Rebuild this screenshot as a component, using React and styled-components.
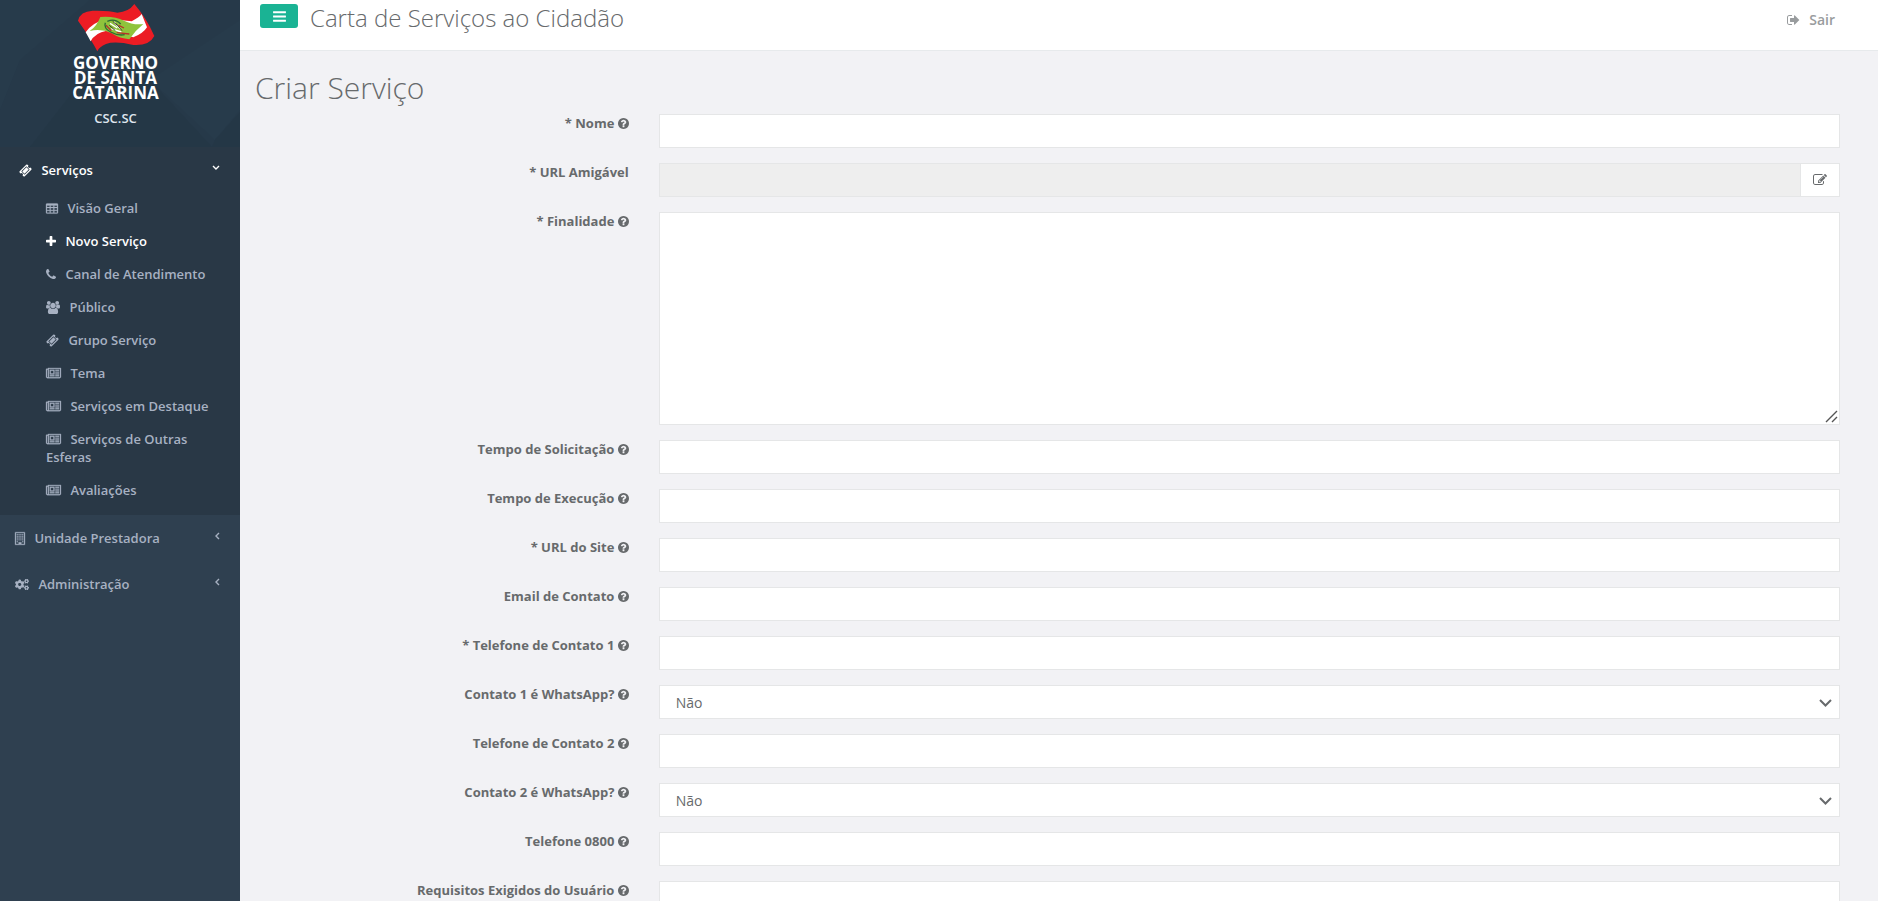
import React from 'react';
import styled, { createGlobalStyle, css } from 'styled-components';
import { FaCogs } from 'react-icons/fa';

const color = {
  text: '#676a6c',
  muted: '#999c9e',
  nav: '#a7b1c2',
  navBg: '#2f4050',
  navActive: '#293846',
  navHeader: '#263949',
  page: '#f2f2f5',
  line: '#e5e6e7',
  primary: '#1ab394',
};

const GlobalStyle = createGlobalStyle`
  *, *::before, *::after { box-sizing: border-box; }
  body {
    margin: 0;
    background: ${color.navBg};
    color: ${color.text};
    font-family: "Open Sans", "Noto Sans", sans-serif;
    font-size: 13px;
    line-height: 18px;
  }
  ul { list-style: none; margin: 0; padding: 0; }
  a { color: inherit; text-decoration: none; }
`;

/* ---------- icons ---------- */

const Glyph = styled.svg`
  width: ${(p) => p.$w}px;
  height: ${(p) => p.$h || 13}px;
  fill: currentColor;
  vertical-align: -2px;
  overflow: visible;
`;

const shapes = {
  bars: [128, 1536, 'M1664 1344v128q0 26-19 45t-45 19h-1408q-26 0-45-19t-19-45v-128q0-26 19-45t45-19h1408q26 0 45 19t19 45zm0-512v128q0 26-19 45t-45 19h-1408q-26 0-45-19t-19-45v-128q0-26 19-45t45-19h1408q26 0 45 19t19 45zm0-512v128q0 26-19 45t-45 19h-1408q-26 0-45-19t-19-45v-128q0-26 19-45t45-19h1408q26 0 45 19t19 45z'],
  plus: [192, 1408, 'M1600 736v192q0 40-28 68t-68 28h-416v416q0 40-28 68t-68 28h-192q-40 0-68-28t-28-68v-416h-416q-40 0-68-28t-28-68v-192q0-40 28-68t68-28h416v-416q0-40 28-68t68-28h192q40 0 68 28t28 68v416h416q40 0 68 28t28 68z'],
  phone: [192, 1408, 'M1600 1240q0 27-10 70.5t-21 68.5q-21 50-122 106-94 51-186 51-27 0-53-3.5t-57.5-12.5-47-14.5-55.5-20.5-49-18q-98-35-175-83-127-79-264-216t-216-264q-48-77-83-175-3-9-18-49t-20.5-55.5-14.5-47-12.5-57.5-3.5-53q0-92 51-186 56-101 106-122 25-11 68.5-21t70.5-10q14 0 21 3 18 6 53 76 11 19 30 54t35 63.5 31 53.5q3 4 17.5 25t21.5 35.5 7 28.5q0 20-28.5 50t-62 55-62 53-28.5 46q0 9 5 22.5t8.5 20.5 14 24 11.5 19q76 137 174 235t235 174q2 1 19 11.5t24 14 20.5 8.5 22.5 5q18 0 46-28.5t53-62 55-62 50-28.5q14 0 28.5 7t35.5 21.5 25 17.5q25 15 53.5 31t63.5 35 54 30q70 35 76 53 3 7 3 21z'],
  help: [128, 1536, 'M1024 1376v-192q0-14-9-23t-23-9h-192q-14 0-23 9t-9 23v192q0 14 9 23t23 9h192q14 0 23-9t9-23zm256-672q0-88-55.5-163t-138.5-116-170-41q-243 0-371 213-15 24 8 42l132 100q7 6 19 6 16 0 25-12 53-68 86-92 34-24 86-24 48 0 85.5 26t37.5 59q0 38-20 61t-68 45q-63 28-115.5 86.5t-52.5 125.5v36q0 14 9 23t23 9h192q14 0 23-9t9-23q0-19 21.5-49.5t54.5-49.5q32-18 49-28.5t46-35 44.5-48 28-60.5 12.5-81zm384 192q0 209-103 385.5t-279.5 279.5-385.5 103-385.5-103-279.5-279.5-103-385.5 103-385.5 279.5-279.5 385.5-103 385.5 103 279.5 279.5 103 385.5z'],
  signOut: [64, 1664, 'M704 1440q0 4 1 20t.5 26.5-3 23.5-10 19.5-20.5 6.5h-320q-119 0-203.5-84.5t-84.5-203.5v-704q0-119 84.5-203.5t203.5-84.5h320q13 0 22.5 9.5t9.5 22.5q0 4 1 20t.5 26.5-3 23.5-10 19.5-20.5 6.5h-320q-66 0-113 47t-47 113v704q0 66 47 113t113 47h312l11.5 1 11.5 3 8 5.5 7 9 2 13.5zm928-544q0 26-19 45l-544 544q-19 19-45 19t-45-19-19-45v-288h-448q-26 0-45-19t-19-45v-384q0-26 19-45t45-19h448v-288q0-26 19-45t45-19 45 19l544 544q19 19 19 45z'],
  edit: [0, 1792, 'M888 1184l116-116-152-152-116 116v56h96v96h56zm440-720q-16-16-33 1l-350 350q-17 17-1 33t33-1l350-350q17-17 1-33zm80 594v190q0 119-84.5 203.5t-203.5 84.5h-832q-119 0-203.5-84.5t-84.5-203.5v-832q0-119 84.5-203.5t203.5-84.5h832q63 0 117 25 15 7 18 23 3 17-9 29l-49 49q-14 14-32 8-23-6-45-6h-832q-66 0-113 47t-47 113v832q0 66 47 113t113 47h832q66 0 113-47t47-113v-126q0-13 9-22l64-64q15-15 35-7t20 29zm-96-738l288 288-672 672h-288v-288zm444 132l-92 92-288-288 92-92q28-28 68-28t68 28l152 152q28 28 28 68t-28 68z'],
  users: [0, 1920, 'M593 896q-162 5-265 128h-134q-82 0-138-40.5t-56-118.5q0-353 124-353 6 0 43.5 21t97.5 42.5 119 21.5q67 0 133-23-5 37-5 66 0 159 93 293zm1071 637q0 120-73 189.5t-194 69.5h-874q-121 0-194-69.5t-73-189.5q0-53 3.5-103.5t14-109 26.5-108.5 43-97.5 62-81 85.5-53.5 111.5-20q10 0 43 21.5t73 48 107 48 135 21.5 135-21.5 107-48 73-48 43-21.5q61 0 111.5 20t85.5 53.5 62 81 43 97.5 26.5 108.5 14 109 3.5 103.5zm-1024-1277q0 106-75 181t-181 75-181-75-75-181 75-181 181-75 181 75 75 181zm704 384q0 159-112.5 271.5t-271.5 112.5-271.5-112.5-112.5-271.5 112.5-271.5 271.5-112.5 271.5 112.5 112.5 271.5zm576 225q0 78-56 118.5t-138 40.5h-134q-103-123-265-128 93-134 93-293 0-29-5-66 66 23 133 23 59 0 119-21.5t97.5-42.5 43.5-21q124 0 124 353zm-128-609q0 106-75 181t-181 75-181-75-75-181 75-181 181-75 181 75 75 181z'],
  ticket: [64, 1664, 'M1024 452l316 316-572 572-316-316zm-211 979l618-618q19-19 19-45t-19-45l-362-362q-18-18-45-18t-45 18l-618 618q-19 19-19 45t19 45l362 362q18 18 45 18t45-18zm889-637l-907 908q-37 37-90.5 37t-90.5-37l-126-126q56-56 56-136t-56-136-136-56-136 56l-125-126q-37-37-37-90.5t37-90.5l907-906q37-37 90.5-37t90.5 37l125 125q-56 56-56 136t56 136 136 56 136-56l126 125q37 37 37 90.5t-37 90.5z'],
  news: [0, 2048, 'M1024 512h-384v384h384v-384zm128 640v128h-640v-128h640zm0-768v640h-640v-640h640zm640 768v128h-512v-128h512zm0-256v128h-512v-128h512zm0-256v128h-512v-128h512zm0-256v128h-512v-128h512zm-1536 960v-960h-128v960q0 26 19 45t45 19 45-19 19-45zm1664 0v-1088h-1536v1088q0 33-11 64h1483q26 0 45-19t19-45zm128-1216v1216q0 80-56 136t-136 56h-1664q-80 0-136-56t-56-136v-1088h256v-128h1792z'],
  table: [0, 1664, 'M160 192h1344q160 0 160 160v1088q0 160-160 160h-1344q-160 0-160-160v-1088q0-160 160-160zM128 480v224h384v-224zM640 480v224h384v-224zM1152 480v224h384v-224zM128 832v256h384v-256zM640 832v256h384v-256zM1152 832v256h384v-256zM128 1216v256h384v-256zM640 1216v256h384v-256zM1152 1216v256h384v-256z'],
  building: [0, 1408, 'M64 0h1280q64 0 64 64v1664q0 64-64 64h-1280q-64 0-64-64v-1664q0-64 64-64zM128 128v1536h384v-224q0-32 32-32h320q32 0 32 32v224h384v-1536zM256 256h128v128h-128zM512 256h128v128h-128zM768 256h128v128h-128zM1024 256h128v128h-128zM256 512h128v128h-128zM512 512h128v128h-128zM768 512h128v128h-128zM1024 512h128v128h-128zM256 768h128v128h-128zM512 768h128v128h-128zM768 768h128v128h-128zM1024 768h128v128h-128zM256 1024h128v128h-128zM512 1024h128v128h-128zM768 1024h128v128h-128zM1024 1024h128v128h-128zM256 1280h128v128h-128zM1024 1280h128v128h-128z'],
};

const heavy = ['news', 'building', 'table'];

function Icon({ name, w, h }) {
  const [x, width, d] = shapes[name];
  const stroke = heavy.includes(name) ? { stroke: 'currentColor', strokeWidth: 40 } : {};
  return (
    <Glyph $w={w} $h={h} viewBox={`${x} 0 ${width} 1792`} aria-hidden="true">
      <path d={d} fillRule="evenodd" {...stroke} />
    </Glyph>
  );
}

const Cogs = styled(FaCogs)`
  width: 14px;
  height: 13px;
  vertical-align: -2px;
`;

const Arrow = styled.svg`
  flex: none;
  width: 8px;
  height: 8px;
  margin-top: 3px;
  fill: none;
  stroke: currentColor;
  stroke-width: 1.4;
`;

/* ---------- sidebar ---------- */

const Shell = styled.div`
  display: flex;
  min-height: 100vh;
`;

const Sidebar = styled.nav`
  flex: none;
  width: 240px;
  background: ${color.navBg};
  color: ${color.nav};
  font-weight: 600;
`;

const Brand = styled.div`
  position: relative;
  display: flex;
  flex-direction: column;
  align-items: center;
  height: 147px;
  padding-top: 3px;
  padding-right: 9px;
  background: ${color.navHeader};
  overflow: hidden;
`;

const Facets = styled.svg`
  position: absolute;
  inset: 0;
  width: 100%;
  height: 100%;
`;

const Flag = styled.svg`
  position: relative;
  width: 78px;
  height: 49px;
`;

const BrandName = styled.div`
  position: relative;
  margin-top: 3px;
  color: #fff;
  font-size: 17px;
  font-weight: 700;
  line-height: 15px;
  text-align: center;
  white-space: pre-line;
`;

const UserName = styled.a`
  position: relative;
  margin-top: 9px;
  color: #dfe4ed;
`;

const NavItem = styled.li`
  ${(p) =>
    p.$active &&
    css`
      border-left: 4px solid ${color.navActive};
      background: ${color.navActive};
      color: #fff;
    `}
`;

const NavLink = styled.a`
  display: flex;
  justify-content: space-between;
  padding: 14px 20px 14px 15px;
`;

const NavText = styled.span`
  svg { margin-right: 6px; }
`;

const SubList = styled.ul`
  display: flex;
  flex-direction: column;
  gap: 1px;
  margin-top: -1px;
  padding-bottom: 9px;
  color: ${color.nav};
`;

const SubLink = styled.a`
  display: block;
  padding: 7px 10px 7px 42px;
  color: ${(p) => (p.$active ? '#fff' : 'inherit')};

  svg { margin-right: 6px; }
`;

const subItems = [
  ['table', 12, 'Visão Geral'],
  ['plus', 10, 'Novo Serviço'],
  ['phone', 10, 'Canal de Atendimento'],
  ['users', 14, 'Público'],
  ['ticket', 13, 'Grupo Serviço'],
  ['news', 15, 'Tema'],
  ['news', 15, 'Serviços em Destaque'],
  ['news', 15, 'Serviços de Outras Esferas'],
  ['news', 15, 'Avaliações'],
];

function StateFlag() {
  return (
    <Flag viewBox="231 9 234 147" aria-hidden="true">
      <path fill="#ec1c24" d="M234 62Q240 34 278 32Q330 31 352 38Q386 36 403 12Q440 55 463 108Q448 138 400 135Q345 122 318 132Q298 140 292 154Q272 115 234 62Z" />
      <path fill="#fff" d="M257 97Q275 68 320 56L395 64Q418 52 425 42L441 82Q430 100 400 112L320 92Q285 98 272 124Z" />
      <path fill="#8fc33c" d="M269 93Q290 80 301 51Q345 48 372 62Q400 76 430 72Q405 92 388 118Q360 116 335 100Q305 85 269 93Z" />
      <g fill="none" strokeWidth="4">
        <path stroke="#2c6a33" d="M316 68Q310 84 332 96Q354 108 374 104M322 64Q345 54 362 72" />
        <path stroke="#fff" d="M330 70L352 84M342 66L362 88M334 86L364 96" />
        <path stroke="#b5342a" d="M318 76L334 92M356 76L372 84M350 98L388 102" />
        <path stroke="#3a3a26" strokeWidth="3" d="M328 76L346 92M348 70L366 92M338 64L352 76" />
      </g>
    </Flag>
  );
}

function Side() {
  return (
    <Sidebar>
      <Brand>
        <Facets viewBox="0 0 240 147" preserveAspectRatio="none" aria-hidden="true">
          <path fill="#273b4b" d="M0 0H90L20 60L0 110ZM150 80L240 20V110L215 140Z" />
          <path fill="#243746" d="M90 70L150 80L212 147H30ZM215 140L240 112V147H212Z" />
        </Facets>
        <StateFlag />
        <BrandName>{'GOVERNO\nDE SANTA\nCATARINA'}</BrandName>
        <UserName href="#perfil">CSC.SC</UserName>
      </Brand>
      <ul>
        <NavItem $active>
          <NavLink href="#servicos">
            <NavText><Icon name="ticket" w={13} /> Serviços</NavText>
            <Arrow viewBox="0 0 8 8"><path d="M1 2L4 5L7 2" /></Arrow>
          </NavLink>
          <SubList>
            {subItems.map(([icon, w, text]) => (
              <li key={text}>
                <SubLink href="#item" $active={icon === 'plus'}>
                  <Icon name={icon} w={w} /> {text}
                </SubLink>
              </li>
            ))}
          </SubList>
        </NavItem>
        <NavItem>
          <NavLink href="#unidade">
            <NavText><Icon name="building" w={10} /> Unidade Prestadora</NavText>
            <Arrow viewBox="0 0 8 8"><path d="M7 1L4 4L7 7" /></Arrow>
          </NavLink>
        </NavItem>
        <NavItem>
          <NavLink href="#administracao">
            <NavText><Cogs /> Administração</NavText>
            <Arrow viewBox="0 0 8 8"><path d="M7 1L4 4L7 7" /></Arrow>
          </NavLink>
        </NavItem>
      </ul>
    </Sidebar>
  );
}

/* ---------- top bar ---------- */

const Main = styled.div`
  flex: 1;
  min-width: 0;
  background: ${color.page};
`;

const TopBar = styled.header`
  display: flex;
  align-items: flex-start;
  height: 51px;
  padding: 4px 43px 0 20px;
  background: #fff;
  border-bottom: 1px solid #e7eaec;
`;

const MenuButton = styled.button`
  display: flex;
  align-items: center;
  justify-content: center;
  width: 38px;
  height: 24px;
  padding: 0;
  border: 0;
  border-radius: 3px;
  background: ${color.primary};
  color: #fff;
`;

const AppTitle = styled.span`
  flex: 1;
  margin-left: 12px;
  font-size: 24px;
  font-weight: 300;
  line-height: 28px;
`;

const Logout = styled.a`
  padding-top: 7px;
  color: ${color.muted};
  font-size: 14px;
  font-weight: 600;

  svg { margin-right: 6px; }
`;

/* ---------- form ---------- */

const PageTitle = styled.h1`
  margin: 0;
  padding: 20px 15px 10px;
  font-size: 30px;
  font-weight: 300;
  line-height: 33px;
`;

const Form = styled.form`
  display: flex;
  flex-direction: column;
  gap: 15px;
  padding: 0 23px 15px 0;
`;

const Row = styled.div`
  display: grid;
  grid-template-columns: minmax(0, 1fr) minmax(0, 3fr);
  align-items: start;
`;

const Label = styled.label`
  padding: 0 15px;
  font-weight: 700;
  text-align: right;
`;

const Cell = styled.div`
  position: relative;
  display: flex;
  padding: 0 15px;
`;

const field = css`
  display: block;
  flex: 1;
  min-width: 0;
  width: 100%;
  height: 34px;
  margin: 0;
  padding: 6px 12px;
  border: 1px solid ${color.line};
  border-radius: 0;
  outline: 0;
  background: #fff;
  color: inherit;
  font-family: inherit;
  font-size: 14px;
`;

const TextInput = styled.input`
  ${field}
  &:read-only { background: #eee; }
`;

const TextArea = styled.textarea`
  ${field}
  height: 213px;
  resize: vertical;
`;

const Grip = styled.svg`
  position: absolute;
  right: 17px;
  bottom: 2px;
  width: 13px;
  height: 13px;
  background: #fff;
  fill: none;
  stroke: #555;
  stroke-width: 1.4;
  pointer-events: none;
`;

const Select = styled.select`
  ${field}
  padding: 6px 16px;
  appearance: none;
`;

const SelectArrow = styled.svg`
  position: absolute;
  top: 14px;
  right: 23px;
  width: 13px;
  height: 8px;
  fill: none;
  stroke: ${color.text};
  stroke-width: 2;
  pointer-events: none;
`;

const EditButton = styled.button`
  flex: none;
  width: 39px;
  height: 34px;
  padding: 0;
  border: 1px solid ${color.line};
  border-left: 0;
  background: #fff;
  color: ${color.text};
`;

const rows = [
  { id: 'nome', label: '* Nome' },
  { id: 'url', label: '* URL Amigável', kind: 'url' },
  { id: 'finalidade', label: '* Finalidade', kind: 'area' },
  { id: 'solicitacao', label: 'Tempo de Solicitação' },
  { id: 'execucao', label: 'Tempo de Execução' },
  { id: 'site', label: '* URL do Site' },
  { id: 'email', label: 'Email de Contato' },
  { id: 'telefone1', label: '* Telefone de Contato 1' },
  { id: 'whatsapp1', label: 'Contato 1 é WhatsApp?', kind: 'select' },
  { id: 'telefone2', label: 'Telefone de Contato 2' },
  { id: 'whatsapp2', label: 'Contato 2 é WhatsApp?', kind: 'select' },
  { id: 'telefone0800', label: 'Telefone 0800' },
  { id: 'requisitos', label: 'Requisitos Exigidos do Usuário', kind: 'area' },
];

function Control({ id, kind }) {
  if (kind === 'area') {
    return (
      <>
        <TextArea id={id} />
        <Grip viewBox="0 0 13 13"><path d="M1 12L12 1M7 12L12 7" /></Grip>
      </>
    );
  }
  if (kind === 'select') {
    return (
      <>
        <Select id={id} defaultValue="Não">
          <option>Não</option>
          <option>Sim</option>
        </Select>
        <SelectArrow viewBox="0 0 13 8"><path d="M1 1L6.500 6.500L12 1" /></SelectArrow>
      </>
    );
  }
  if (kind === 'url') {
    return (
      <>
        <TextInput id={id} type="text" readOnly />
        <EditButton type="button" aria-label="Editar URL"><Icon name="edit" w={14} h={14} /></EditButton>
      </>
    );
  }
  return <TextInput id={id} type="text" />;
}

export default function App() {
  return (
    <>
      <GlobalStyle />
      <Shell>
        <Side />
        <Main>
          <TopBar>
            <MenuButton type="button" aria-label="Menu"><Icon name="bars" w={13} h={15} /></MenuButton>
            <AppTitle>Carta de Serviços ao Cidadão</AppTitle>
            <Logout href="#sair"><Icon name="signOut" w={13} h={14} /> Sair</Logout>
          </TopBar>
          <PageTitle>Criar Serviço</PageTitle>
          <Form>
            {rows.map(({ id, label, kind }) => (
              <Row key={id}>
                <Label htmlFor={id}>
                  {label}
                  {kind !== 'url' && <> <Icon name="help" w={11} /></>}
                </Label>
                <Cell><Control id={id} kind={kind} /></Cell>
              </Row>
            ))}
          </Form>
        </Main>
      </Shell>
    </>
  );
}
